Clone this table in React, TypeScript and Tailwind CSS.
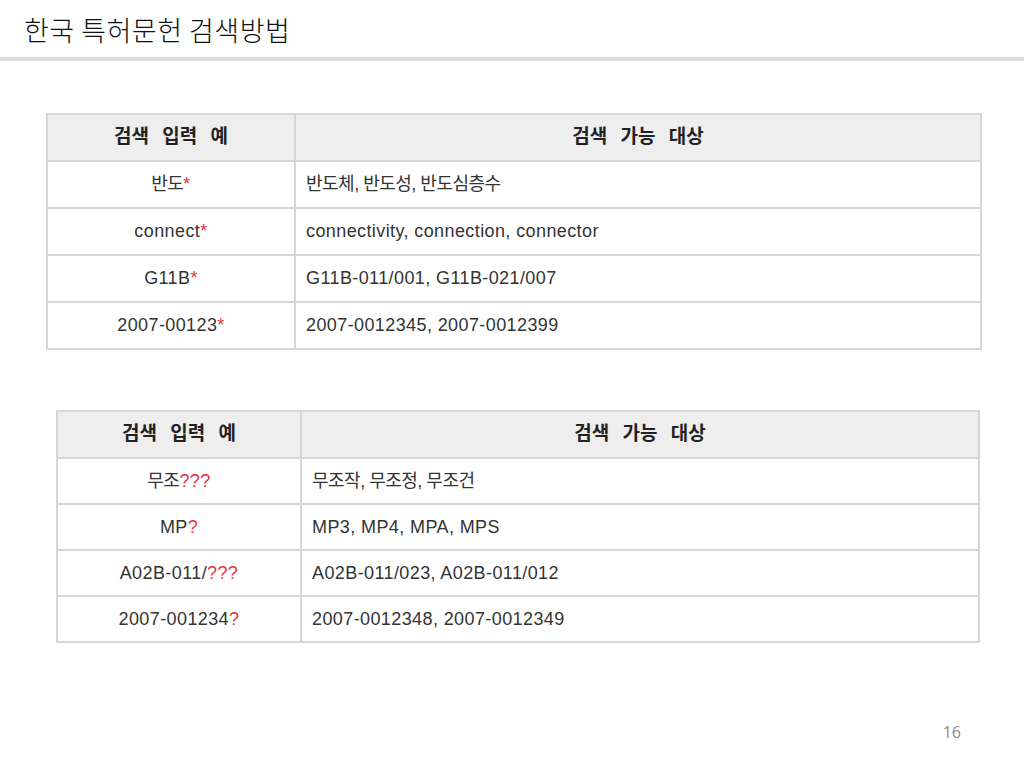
const sans = "font-['Liberation_Sans','Noto_Sans_CJK_KR',sans-serif]";

type Row = { input: string; mark: string; result: string; ko?: boolean };

const tableA: Row[] = [
  { input: "반도", mark: "*", result: "반도체, 반도성, 반도심층수", ko: true },
  { input: "connect", mark: "*", result: "connectivity, connection, connector" },
  { input: "G11B", mark: "*", result: "G11B-011/001, G11B-021/007" },
  { input: "2007-00123", mark: "*", result: "2007-0012345, 2007-0012399" },
];

const tableB: Row[] = [
  { input: "무조", mark: "???", result: "무조작, 무조정, 무조건", ko: true },
  { input: "MP", mark: "?", result: "MP3, MP4, MPA, MPS" },
  { input: "A02B-011/", mark: "???", result: "A02B-011/023, A02B-011/012" },
  { input: "2007-001234", mark: "?", result: "2007-0012348, 2007-0012349" },
];

function SearchTable({ rows, wide }: { rows: Row[]; wide: boolean }) {
  const box = wide ? "ml-[46px] w-[936px]" : "ml-[56px] w-[924px]";
  const left = wide ? "w-[248px]" : "w-[244px]";
  const rowH = wide ? "h-[47px]" : "h-[46px]";
  const lastH = wide ? "h-[45px]" : "h-[44px]";
  return (
    <div className={`${box} border-2 border-[#d6d6d6] ${sans}`}>
      <div className="flex h-[47px] bg-[#eeeeee] border-b-2 border-[#d6d6d6] text-[19px] font-bold text-[#222] [word-spacing:8px]">
        <div className={`${left} shrink-0 border-r-2 border-[#d6d6d6] flex items-center justify-center`}>
          검색 입력 예
        </div>
        <div className="flex-1 flex items-center justify-center">검색 가능 대상</div>
      </div>
      {rows.map((r, i) => {
        const last = i === rows.length - 1;
        const ko = "tracking-[-0.5px]";
        return (
          <div
            key={r.input}
            className={`flex ${last ? lastH : `${rowH} border-b-2 border-[#d6d6d6]`} text-[18px] tracking-[0.4px] text-[#333]`}
          >
            <div className={`${left} shrink-0 border-r-2 border-[#d6d6d6] flex items-center justify-center`}>
              <span className={r.ko ? ko : ""}>{r.input}</span>
              <span className="text-[#e8323c]">{r.mark}</span>
            </div>
            <div className="flex-1 flex items-center pl-[10px]">
              <span className={r.ko ? ko : ""}>{r.result}</span>
            </div>
          </div>
        );
      })}
    </div>
  );
}

export default function App() {
  return (
    <div className="w-[1024px] h-[768px] bg-white flex flex-col overflow-hidden">
      <div className="h-[57px] pl-[24px] pt-[12px] text-[27px] leading-[36px] tracking-[0.5px] text-[#111] font-['Noto_Sans_CJK_KR',serif] font-light">
        한국 특허문헌 검색방법
      </div>
      <div className="h-[4px] bg-[#dcdcdc]" />
      <div className="pt-[52px]">
        <SearchTable rows={tableA} wide />
      </div>
      <div className="pt-[60px]">
        <SearchTable rows={tableB} wide={false} />
      </div>
      <div className="mt-auto pb-[24px] pr-[63px] flex justify-end text-[16px] text-[#8a8a8a] font-['Open_Sans',sans-serif]">
        16
      </div>
    </div>
  );
}
